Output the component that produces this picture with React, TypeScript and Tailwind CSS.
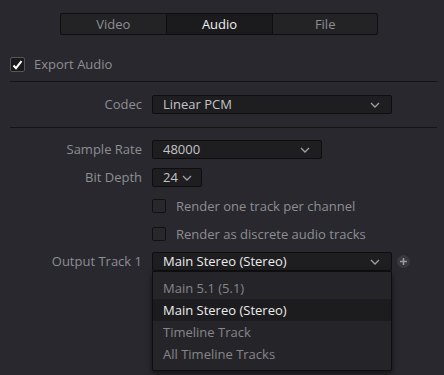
import { useState } from "react";

const font = { fontFamily: '"Open Sans", "Noto Sans", sans-serif' };

function Chevron({ className = "" }: { className?: string }) {
  return (
    <svg width="10" height="6" viewBox="0 0 10 6" className={className}>
      <path d="M1 1 L5 5 L9 1" fill="none" stroke="#a0a0a4" strokeWidth="1.3" />
    </svg>
  );
}

function Row({ label, children }: { label: string; children?: React.ReactNode }) {
  return (
    <div className="flex items-center">
      <div className="w-[142px] text-right text-[#8e8e92] shrink-0">{label}</div>
      <div className="ml-[10px] flex items-center">{children}</div>
    </div>
  );
}

function Select({ value, width, bright = false }: { value: string; width: string; bright?: boolean }) {
  return (
    <div
      className={`${width} h-[19px] flex items-center justify-between pl-[10px] pr-[11px] bg-[#1e1e21] border border-[#0e0e10] rounded-[2px] ${bright ? "text-[#ececec]" : "text-[#c4c4c6]"}`}
    >
      <span>{value}</span>
      <Chevron />
    </div>
  );
}

function Box() {
  return <div className="w-[14px] h-[14px] bg-[#28282c] border border-[#111113] rounded-[2px]" />;
}

export default function App() {
  const [tab] = useState("Audio");
  const tabs = [
    { name: "Video", w: "w-[105px]" },
    { name: "Audio", w: "w-[107px]" },
    { name: "File", w: "w-[105px]" },
  ];
  const items = ["Main 5.1 (5.1)", "Main Stereo (Stereo)", "Timeline Track", "All Timeline Tracks"];

  return (
    <div style={font} className="w-[444px] h-[375px] bg-[#28282e] overflow-hidden text-[13px] leading-none">
      {/* tabs */}
      <div className="pt-[13px] pl-[60px]">
        <div className="flex w-[318px] h-[22px] border border-[#0f0f11] rounded-[2px] bg-[#232326]">
          {tabs.map((t, i) => (
            <div
              key={t.name}
              className={`${t.w} flex items-center justify-center ${i > 0 ? "border-l border-[#0f0f11]" : ""} ${tab === t.name ? "bg-[#1b1b1d] text-[#f0f0f0]" : "text-[#8e8e92]"}`}
            >
              {t.name}
            </div>
          ))}
        </div>
      </div>

      {/* export audio */}
      <div className="mt-[22px] ml-[10px] flex items-center">
        <div className="w-[15px] h-[15px] bg-[#1a1a1c] border border-[#55555a] rounded-[2px] flex items-center justify-center">
          <svg width="11" height="10" viewBox="0 0 11 10">
            <path d="M1.5 5.5 L4 8.2 L9.5 1.2" fill="none" stroke="#ffffff" strokeWidth="2" />
          </svg>
        </div>
        <span className="ml-[9px] text-[#8e8e92]">Export Audio</span>
      </div>

      <div className="mt-[9px] ml-[10px] mr-[7px] h-px bg-[#141416]" />

      <div className="mt-[13px]">
        <Row label="Codec">
          <Select value="Linear PCM" width="w-[240px]" />
        </Row>
      </div>

      <div className="mt-[13px] ml-[10px] mr-[7px] h-px bg-[#141416]" />

      <div className="mt-[12px] flex flex-col gap-[9px]">
        <Row label="Sample Rate">
          <Select value="48000" width="w-[170px]" />
        </Row>
        <Row label="Bit Depth">
          <div className="w-[50px] h-[19px] flex items-center pl-[10px] gap-[4px] bg-[#1e1e21] border border-[#0e0e10] rounded-[2px] text-[#c4c4c6]">
            <span>24</span>
            <Chevron />
          </div>
        </Row>
      </div>

      <div className="mt-[12px] flex flex-col gap-[14px]">
        <Row label="">
          <Box />
          <span className="ml-[10px] text-[#8e8e92]">Render one track per channel</span>
        </Row>
        <Row label="">
          <Box />
          <span className="ml-[10px] text-[#8e8e92]">Render as discrete audio tracks</span>
        </Row>
      </div>

      <div className="mt-[11px]">
        <Row label="Output Track 1">
          <div className="relative">
            <Select value="Main Stereo (Stereo)" width="w-[240px]" bright />
            <div className="absolute left-0 top-full w-[240px] pt-[5px] pb-[5px] bg-[#252529] border border-[#0e0e10] rounded-b-[2px] shadow-[0_3px_6px_rgba(0,0,0,0.5)]">
              {items.map((it) => (
                <div
                  key={it}
                  className={`h-[22px] flex items-center pl-[10px] ${it === "Main Stereo (Stereo)" ? "bg-[#1c1c1f] text-[#ececec]" : "text-[#86868a]"}`}
                >
                  {it}
                </div>
              ))}
            </div>
          </div>
          <div className="ml-[5px] w-[13px] h-[13px] rounded-full bg-[#38383d] flex items-center justify-center">
            <svg width="7" height="7" viewBox="0 0 7 7">
              <path d="M3.5 0 V7 M0 3.5 H7" stroke="#9a9a9e" strokeWidth="1.6" />
            </svg>
          </div>
        </Row>
      </div>
    </div>
  );
}
